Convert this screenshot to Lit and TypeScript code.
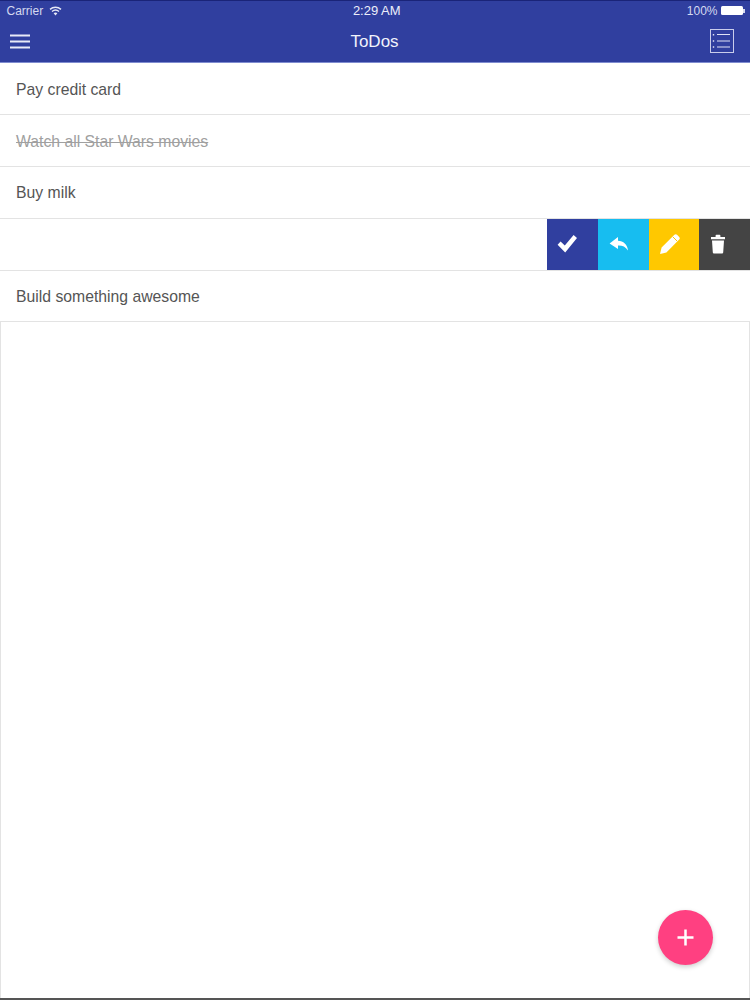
import { LitElement, html, css, svg } from 'lit';
import { customElement } from 'lit/decorators.js';

interface Todo {
  text: string;
  done?: boolean;
  swiped?: boolean;
}

const TODOS: Todo[] = [
  { text: 'Pay credit card' },
  { text: 'Watch all Star Wars movies', done: true },
  { text: 'Buy milk' },
  { text: '', swiped: true },
  { text: 'Build something awesome' },
];

const ACTIONS = [
  {
    name: 'check',
    icon: svg`<path d="M1.6 12.8 L4.6 9.6 L8.8 13.4 L17.6 3 L21 6 L9.2 20.4 Z" fill="#fff"/>`,
  },
  {
    name: 'reply',
    icon: svg`<path d="M11 5 L2.6 11.4 L11 17 L11 13.4 C15 13.2 18.4 14.4 21 18.4 C20.4 12.6 16.4 9 11 8.8 Z" fill="#fff"/>`,
  },
  {
    name: 'edit',
    icon: svg`<path d="M2 22 L3.6 15.6 L16.4 2.8 C17.2 2 18.2 2 19 2.8 L21.2 5 C22 5.8 22 6.8 21.2 7.6 L8.4 20.4 Z" fill="#fff"/><path d="M14.8 4.8 L19.2 9.2" stroke="#ffc800" stroke-width="1"/>`,
  },
  {
    name: 'trash',
    icon: svg`<path d="M5 5 H9.6 V3.6 C9.6 3 10 2.8 10.4 2.8 H13.6 C14 2.8 14.4 3 14.4 3.6 V5 H19 V7.2 H5 Z M6 8.6 H18 L17.2 20.6 C17.1 21.2 16.7 21.6 16.2 21.6 H7.8 C7.3 21.6 6.9 21.2 6.8 20.6 Z" fill="#fff"/>`,
  },
];

@customElement('app-root')
export class AppRoot extends LitElement {
  static styles = css`
    :host {
      display: block;
      width: 750px;
      height: 1000px;
      font-family: 'Liberation Sans', Roboto, sans-serif;
      background: #fff;
    }
    .page {
      display: flex;
      flex-direction: column;
      height: 1000px;
      box-sizing: border-box;
      border-bottom: 2px solid #555;
      position: relative;
    }
    .top {
      background: #303f9f;
      border-top: 1px solid #1a2478;
      border-bottom: 1px solid #7f8cd0;
      color: #fff;
      height: 63px;
      box-sizing: border-box;
      flex: none;
    }
    .status {
      display: grid;
      grid-template-columns: 1fr auto 1fr;
      align-items: center;
      height: 19px;
      padding: 0 5px 0 6.5px;
      font-size: 12px;
      color: #d5d9f0;
    }
    .status .left {
      display: flex;
      align-items: center;
      gap: 6px;
    }
    .status .right {
      display: flex;
      align-items: center;
      justify-content: flex-end;
      gap: 3.5px;
    }
    .time {
      font-size: 13px;
      padding-left: 2px;
      color: #eceefa;
    }
    .battery {
      display: flex;
      align-items: center;
      gap: 0.5px;
    }
    .battery .cell {
      width: 21.5px;
      height: 9px;
      background: #fff;
      border-radius: 1.5px;
    }
    .battery .tip {
      width: 2px;
      height: 4px;
      background: #d5d9f0;
    }
    .bar {
      display: grid;
      grid-template-columns: 1fr auto 1fr;
      align-items: center;
      height: 42px;
      padding: 0 16px 0 10px;
    }
    .bar .title {
      font-size: 17px;
      color: #f2f3fb;
      padding: 2px 0 0 5px;
    }
    .bar .list-icon {
      justify-self: end;
      display: block;
    }
    .menu {
      display: block;
    }
    .rows {
      flex: none;
      padding-top: 0.5px;
    }
    .row {
      display: flex;
      align-items: center;
      height: 51.75px;
      box-sizing: border-box;
      padding: 2px 0 0 16px;
      border-bottom: 1px solid #e3e3e3;
      font-size: 15.75px;
      color: #555;
    }
    .row.done {
      color: #a0a0a0;
      text-decoration: line-through;
    }
    .row.swiped {
      padding: 0;
      justify-content: flex-end;
    }
    .actions {
      display: flex;
      height: 100%;
    }
    .action {
      width: 50.75px;
      box-sizing: border-box;
      display: flex;
      align-items: center;
      justify-content: center;
    }
    .action svg {
      display: block;
    }
    .check {
      background: #303f9f;
      padding-right: 8px;
    }
    .reply {
      background: #17bdf0;
      padding-right: 9px;
    }
    .edit {
      background: #ffc800;
      padding-right: 7px;
    }
    .trash {
      background: #444;
      padding-right: 13px;
    }
    .rest {
      flex: 1;
      border-left: 1px solid #e3e3e3;
      border-right: 1px solid #e3e3e3;
    }
    .fab {
      position: absolute;
      left: 658px;
      top: 909.5px;
      width: 55px;
      height: 55px;
      border-radius: 50%;
      background: #ff4081;
      box-shadow: 0 2px 5px rgba(0, 0, 0, 0.2);
      display: flex;
      align-items: center;
      justify-content: center;
    }
  `;

  render() {
    return html`
      <div class="page">
        <div class="top">
          <div class="status">
            <div class="left">
              <span>Carrier</span>
              <svg width="13" height="10" viewBox="0 0 13 10">
                <path d="M1 3.4 C4.2 .6 8.8 .6 12 3.4" fill="none" stroke="#e6e8f6" stroke-width="1.4"/>
                <path d="M3 5.5 C5 3.8 8 3.8 10 5.5" fill="none" stroke="#e6e8f6" stroke-width="1.4"/>
                <path d="M4.6 7.2 C5.7 6.2 7.3 6.2 8.4 7.2 L6.5 9.4 Z" fill="#e6e8f6"/>
              </svg>
            </div>
            <span class="time">2:29 AM</span>
            <div class="right">
              <span>100%</span>
              <div class="battery"><div class="cell"></div><div class="tip"></div></div>
            </div>
          </div>
          <div class="bar">
            <svg class="menu" width="20" height="15" viewBox="0 0 20 15">
              <path d="M0 1.5 H20 M0 7.5 H20 M0 13.5 H20" stroke="#e8eaf8" stroke-width="2"/>
            </svg>
            <span class="title">ToDos</span>
            <svg class="list-icon" width="24" height="24" viewBox="0 0 24 24" fill="none" stroke="#c9cdeb">
              <rect x=".5" y=".5" width="23" height="23"/>
              <path d="M7 5.5 H20 M7 12 H20 M7 18 H20" stroke="#dfe2f5"/>
              <path d="M3.5 5 V6.5 M3.5 11.2 V12.7 M3.5 17.3 V18.8" stroke="#dfe2f5" stroke-width="1.4"/>
            </svg>
          </div>
        </div>
        <div class="rows">${TODOS.map((t) => this.renderRow(t))}</div>
        <div class="rest"></div>
        <div class="fab">
          <svg width="18" height="18" viewBox="0 0 18 18">
            <path d="M8.5 1.5 V17.5 M.5 9.5 H16.5" stroke="#fff" stroke-width="2.5"/>
          </svg>
        </div>
      </div>
    `;
  }

  renderRow(t: Todo) {
    if (t.swiped) {
      return html`
        <div class="row swiped">
          <div class="actions">
            ${ACTIONS.map(
              (a) => html`
                <div class="action ${a.name}">
                  <svg width="24" height="24" viewBox="0 0 24 24">${a.icon}</svg>
                </div>
              `
            )}
          </div>
        </div>
      `;
    }
    return html`<div class="row ${t.done ? 'done' : ''}">${t.text}</div>`;
  }
}
